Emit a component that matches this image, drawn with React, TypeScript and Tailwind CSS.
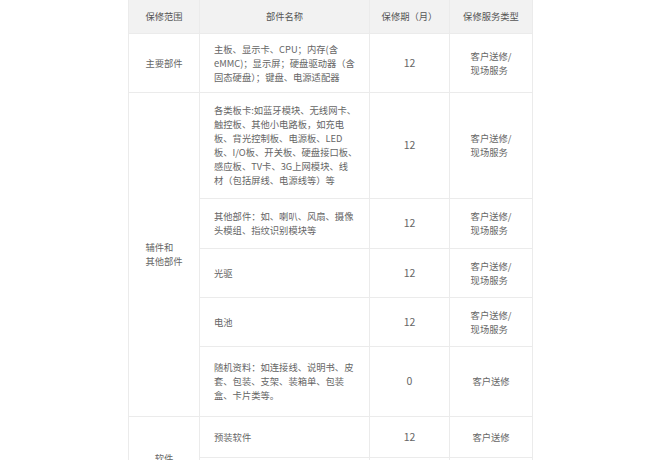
type Row = {
  scope?: { label: React.ReactNode; span: number };
  name: string[];
  months: string;
  service: string[];
  h: string;
};

const rows: Row[] = [
  {
    scope: { label: "主要部件", span: 1 },
    name: [
      "主板、显示卡、CPU；内存(含",
      "eMMC)；显示屏；硬盘驱动器（含",
      "固态硬盘）；键盘、电源适配器",
    ],
    months: "12",
    service: ["客户送修/", "现场服务"],
    h: "h-[59px]",
  },
  {
    scope: {
      label: (
        <span className="inline-block text-left">
          辅件和
          <br />
          其他部件
        </span>
      ),
      span: 5,
    },
    name: [
      "各类板卡:如蓝牙模块、无线网卡、",
      "触控板、其他小电路板，如充电",
      "板、背光控制板、电源板、LED",
      "板、I/O板、开关板、硬盘接口板、",
      "感应板、TV卡、3G上网模块、线",
      "材（包括屏线、电源线等）等",
    ],
    months: "12",
    service: ["客户送修/", "现场服务"],
    h: "h-[106px]",
  },
  {
    name: ["其他部件：如、喇叭、风扇、摄像", "头模组、指纹识别模块等"],
    months: "12",
    service: ["客户送修/", "现场服务"],
    h: "h-[50px]",
  },
  {
    name: ["光驱"],
    months: "12",
    service: ["客户送修/", "现场服务"],
    h: "h-[49px]",
  },
  {
    name: ["电池"],
    months: "12",
    service: ["客户送修/", "现场服务"],
    h: "h-[49px]",
  },
  {
    name: [
      "随机资料：如连接线、说明书、皮",
      "套、包装、支架、装箱单、包装",
      "盒、卡片类等。",
    ],
    months: "0",
    service: ["客户送修"],
    h: "h-[70px]",
  },
  {
    scope: { label: "软件", span: 2 },
    name: ["预装软件"],
    months: "12",
    service: ["客户送修"],
    h: "h-[41px]",
  },
  {
    name: [],
    months: "",
    service: [],
    h: "h-[42px]",
  },
];

const cell = "border border-[#ebebeb] align-middle";

export default function App() {
  return (
    <div className="h-[460px] w-[650px] overflow-hidden bg-white font-['Noto_Sans_CJK_SC','Noto_Sans',sans-serif] text-[9.3px] leading-[14px] text-[#666]">
      <table className="ml-[128px] w-[404px] table-fixed border-collapse">
        <colgroup>
          <col className="w-[71px]" />
          <col className="w-[170px]" />
          <col className="w-[80px]" />
          <col className="w-[83px]" />
        </colgroup>
        <thead>
          <tr className="h-[33px] bg-[#f2f2f2] text-[#555]">
            <th className={`${cell} border-t-0 text-center font-normal`}>保修范围</th>
            <th className={`${cell} border-t-0 text-center font-normal`}>部件名称</th>
            <th className={`${cell} border-t-0 text-center font-normal`}>保修期（月）</th>
            <th className={`${cell} border-t-0 text-center font-normal`}>保修服务类型</th>
          </tr>
        </thead>
        <tbody>
          {rows.map((r, i) => (
            <tr key={i} className={r.h}>
              {r.scope ? (
                <td rowSpan={r.scope.span} className={`${cell} text-center`}>
                  {r.scope.label}
                </td>
              ) : null}
              <td className={`${cell} whitespace-nowrap px-[14px]`}>
                {r.name.map((l, j) => (
                  <div key={j}>{l}</div>
                ))}
              </td>
              <td className={`${cell} text-center text-[10.5px]`}>{r.months}</td>
              <td className={`${cell} text-center`}>
                <span className="inline-block text-left">
                  {r.service.map((l, j) => (
                    <div key={j}>{l}</div>
                  ))}
                </span>
              </td>
            </tr>
          ))}
        </tbody>
      </table>
    </div>
  );
}
